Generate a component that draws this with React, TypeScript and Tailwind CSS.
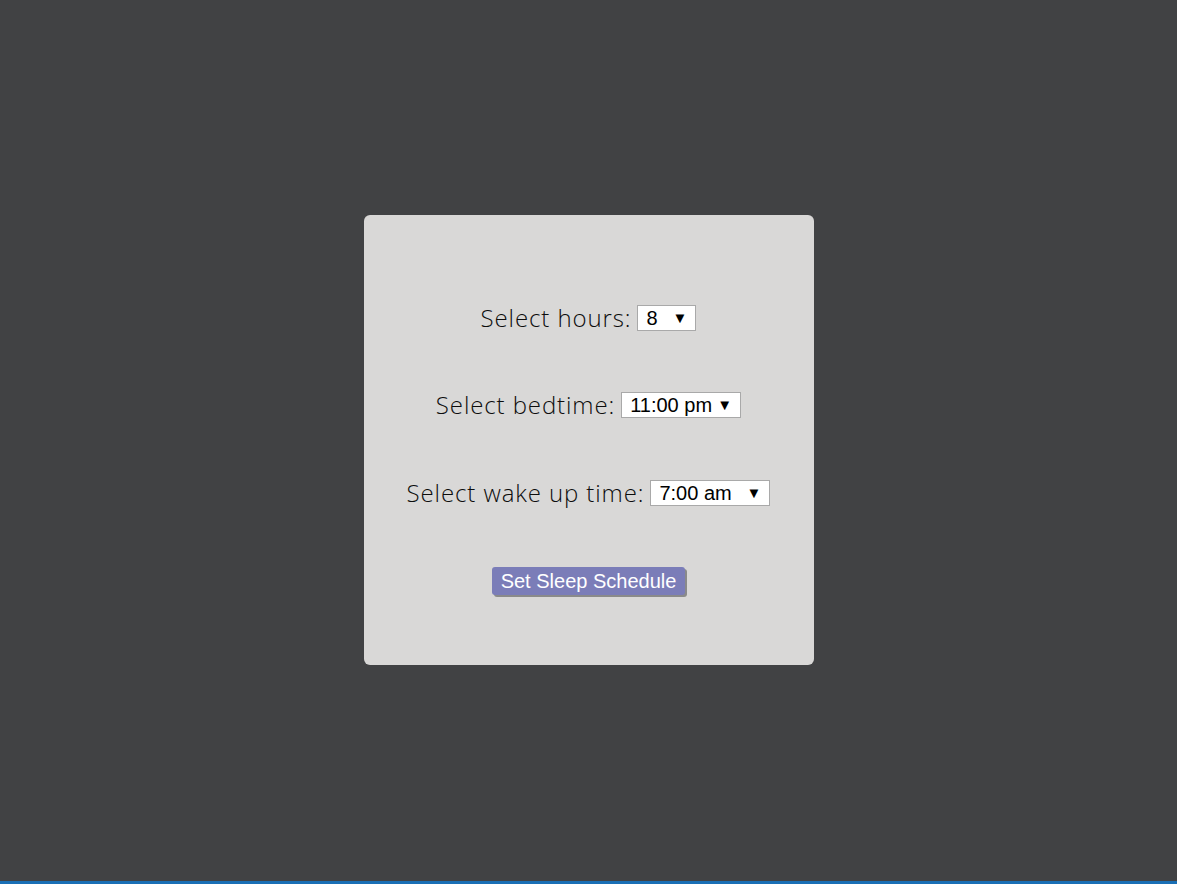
import { useState } from 'react';

const hourOptions = ['6', '7', '8', '9', '10'];
const bedOptions = ['9:00 pm', '10:00 pm', '11:00 pm', '12:00 am'];
const wakeOptions = ['5:00 am', '6:00 am', '7:00 am', '8:00 am'];

function Picker({ value, options, onChange, width }: { value: string; options: string[]; onChange: (v: string) => void; width: string }) {
  return (
    <div className={`relative flex ${width} h-[26px]`}>
      <select
        value={value}
        onChange={(e) => onChange(e.target.value)}
        className="appearance-none block w-full h-full bg-white border border-[#a9a9a9] pl-[8px] py-0 text-[20px] leading-[24px] tracking-normal text-black font-['Liberation_Sans',Arial,sans-serif] outline-none"
      >
        {options.map((o) => (
          <option key={o} value={o}>{o}</option>
        ))}
      </select>
      <span className="pointer-events-none absolute right-[9px] inset-y-0 flex items-center text-[15px] tracking-normal text-black font-['DejaVu_Sans',sans-serif]">▼</span>
    </div>
  );
}

export default function App() {
  const [hours, setHours] = useState('8');
  const [bedtime, setBedtime] = useState('11:00 pm');
  const [wake, setWake] = useState('7:00 am');

  return (
    <div className="min-h-screen h-[884px] bg-[#414244] flex flex-col border-b-[3px] border-[#1a6fb5]">
      <div className="flex-1 flex items-center justify-center pb-[1px]">
        <div className="w-[450px] h-[450px] bg-[#d9d8d7] rounded-[6px] flex flex-col items-center pt-[90px] text-[#0d0d0d] font-['Open_Sans',sans-serif] font-light text-[24px] tracking-[0.9px]">
          <div className="flex items-center gap-[6px] h-[26px]">
            <span>Select hours:</span>
            <Picker value={hours} options={hourOptions} onChange={setHours} width="w-[59px]" />
          </div>
          <div className="flex items-center gap-[6px] h-[26px] mt-[61px]">
            <span>Select bedtime:</span>
            <Picker value={bedtime} options={bedOptions} onChange={setBedtime} width="w-[120px]" />
          </div>
          <div className="flex items-center gap-[6px] h-[26px] mt-[62px]">
            <span>Select wake up time:</span>
            <Picker value={wake} options={wakeOptions} onChange={setWake} width="w-[120px]" />
          </div>
          <button className="mt-[61px] h-[28px] px-[9px] bg-[#7b7db8] text-white text-[20px] leading-none tracking-normal rounded-[3px] shadow-[2px_2px_0_#8a8a8a] font-['Liberation_Sans',Arial,sans-serif]">
            Set Sleep Schedule
          </button>
        </div>
      </div>
    </div>
  );
}
